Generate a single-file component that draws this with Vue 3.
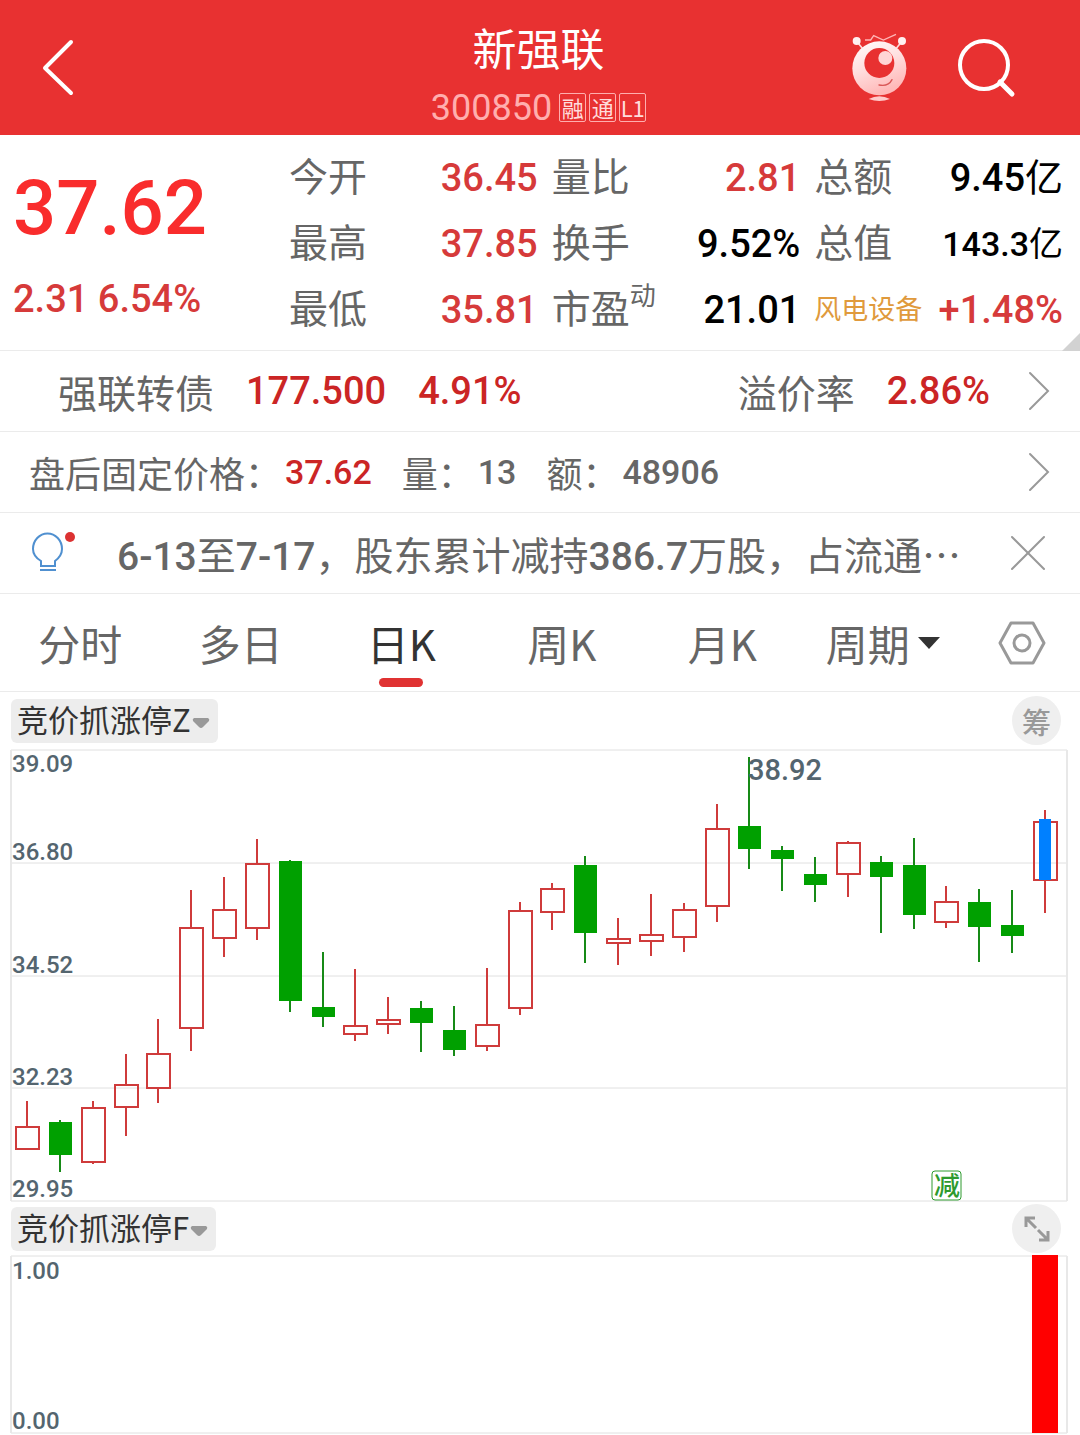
<template>
  <div class="stock-page" lang="zh-CN">
    <header class="header">
      <button class="icon-btn back" type="button" aria-label="返回">
        <svg width="34" height="60" viewBox="0 0 34 60">
          <path d="M30 4 4 30 30 55" fill="none" stroke="#fff" stroke-width="4" stroke-linecap="round" stroke-linejoin="round" />
        </svg>
      </button>
      <div class="title-box">
        <h1 class="title">新强联</h1>
        <div class="code-row">
          <span class="code">300850</span>
          <span v-for="tag in tags" :key="tag" class="tag">{{ tag }}</span>
        </div>
      </div>
      <div class="actions">
        <button class="icon-btn" type="button" aria-label="智能助手">
          <svg width="60" height="72" viewBox="60 36 180 216">
            <defs>
              <linearGradient id="robot" x1="0" y1="0" x2="0.4" y2="1">
                <stop offset="0" stop-color="#fff" />
                <stop offset="0.5" stop-color="#ffe0e0" />
                <stop offset="1" stop-color="#ffb9b9" />
              </linearGradient>
            </defs>
            <path d="M105 60h17l9-13 29 13 38-17" fill="none" stroke="#ffb5b5" stroke-width="4" />
            <path d="M82 66 98 86M214 66 198 86" stroke="#ffdada" stroke-width="5" />
            <circle cx="80" cy="63" r="12" fill="#fff0f0" />
            <circle cx="216" cy="63" r="12" fill="#fff0f0" />
            <circle cx="148" cy="145" r="81" fill="url(#robot)" />
            <circle cx="148" cy="129" r="45" fill="#e83131" />
            <circle cx="166" cy="114" r="21" fill="#ffd5d5" />
            <path d="M147 195q28 6 39-16" fill="none" stroke="#d95757" stroke-width="4" stroke-linecap="round" />
            <path d="M116 237q32-16 64 0-32 12-64 0z" fill="#ffcaca" />
          </svg>
        </button>
        <button class="icon-btn" type="button" aria-label="搜索">
          <svg width="58" height="60" viewBox="0 0 58 60">
            <circle cx="26" cy="27" r="24" fill="none" stroke="#fff" stroke-width="4" />
            <path d="M42 44 54 56" stroke="#fff" stroke-width="5" stroke-linecap="round" />
          </svg>
        </button>
      </div>
    </header>

    <section class="quote">
      <div class="quote-main">
        <div class="price">37.62</div>
        <div class="change">2.31 6.54%</div>
      </div>
      <dl class="stats">
        <div v-for="item in stats" :key="item.label" class="stat">
          <dt :class="{ sector: item.sector }">{{ item.label }}<sup v-if="item.sup">{{ item.sup }}</sup></dt>
          <dd :class="{ red: item.up, compact: item.compact }">{{ item.value }}<span v-if="item.unit" class="unit">{{ item.unit }}</span></dd>
        </div>
      </dl>
    </section>

    <a class="row bond" href="#">
      <span>强联转债</span>
      <span class="num">177.500</span>
      <span class="num">4.91%</span>
      <span class="push">溢价率</span>
      <span class="num">2.86%</span>
      <svg class="chevron" width="22" height="42" viewBox="0 0 22 42">
        <path d="M2 3 20 21 2 39" />
      </svg>
    </a>

    <a class="row fixed" href="#">
      <span>盘后固定价格：<b class="num">37.62</b></span>
      <span>量：<b>13</b></span>
      <span>额：<b>48906</b></span>
      <svg class="chevron push" width="22" height="42" viewBox="0 0 22 42">
        <path d="M2 3 20 21 2 39" />
      </svg>
    </a>

    <div class="row notice">
      <svg class="bulb" width="48" height="44" viewBox="0 0 48 44">
        <path d="M10 35v-5C5 27 2 23 2 18a14 15 0 0 1 29 0c0 5-3 9-7 12v5zM9 39h16" fill="none" stroke="#5090d0" stroke-width="2" />
        <circle cx="39" cy="6" r="5" fill="#dc3232" />
      </svg>
      <a class="notice-text" href="#"><b>6-13</b>至<b>7-17</b>，股东累计减持<b>386.7</b>万股，占流通<span class="dots">…</span></a>
      <button class="icon-btn push" type="button" aria-label="关闭">
        <svg width="38" height="38" viewBox="0 0 38 38">
          <path d="M3 3 35 35M35 3 3 35" stroke="#999" stroke-width="2" stroke-linecap="round" />
        </svg>
      </button>
    </div>

    <nav class="tabs">
      <button
        v-for="tab in tabs"
        :key="tab"
        type="button"
        class="tab"
        :class="{ active: tab === activeTab }"
        @click="activeTab = tab"
      >
        {{ tab }}
        <svg v-if="tab === '周期'" width="22" height="12" viewBox="0 0 22 12">
          <path d="M0 0h22L11 12z" fill="#333" />
        </svg>
      </button>
      <button class="icon-btn" type="button" aria-label="设置">
        <svg width="48" height="44" viewBox="0 0 48 44" fill="none" stroke="#999" stroke-width="3">
          <path d="M13 2h22l11 20-11 20H13L2 22z" stroke-linejoin="round" />
          <circle cx="24" cy="22" r="8" />
        </svg>
      </button>
    </nav>

    <div class="panel-head main-head">
      <button class="chip" type="button">
        竞价抓涨停Z
        <svg width="18" height="12" viewBox="0 0 18 12"><path d="M2 1h14q2 1 1 3l-6 6q-2 2-4 0L1 4Q0 2 2 1z" fill="#999" /></svg>
      </button>
      <button class="round" type="button">筹</button>
    </div>

    <svg class="chart" viewBox="0 0 1080 453">
      <path v-for="y in gridLines" :key="y" :d="`M11 ${y}H1067`" stroke="#e0e0e0" />
      <path d="M11 1V452M1067 1V452" stroke="#e8e8e8" stroke-width="2" />
      <g v-for="(c, i) in candles" :key="i">
        <template v-if="c[0]">
          <path :d="`M${cx(i)} ${c[1]}V${c[2]}M${cx(i)} ${c[3]}V${c[4]}`" stroke="#cf3b3b" stroke-width="2" />
          <rect :x="cx(i) - 11" :y="c[2] + 1" width="23" :height="c[3] - c[2] - 2" fill="none" stroke="#cf3b3b" stroke-width="2" />
        </template>
        <template v-else>
          <path :d="`M${cx(i)} ${c[1]}V${c[4]}`" stroke="#178a17" stroke-width="2" />
          <rect :x="cx(i) - 11" :y="c[2]" width="23" :height="c[3] - c[2]" fill="#00a000" />
        </template>
      </g>
      <rect x="1039" y="70" width="12" height="61" fill="#0080ff" />
      <text v-for="l in priceLabels" :key="l.text" x="12" :y="l.y" class="axis">{{ l.text }}</text>
      <text x="748" y="31" class="peak">38.92</text>
      <rect x="932" y="422" width="29" height="29" rx="3" fill="#fff" stroke="#2e9a2e" />
      <text x="947" y="446" class="mark">减</text>
    </svg>

    <div class="panel-head">
      <button class="chip" type="button">
        竞价抓涨停F
        <svg width="18" height="12" viewBox="0 0 18 12"><path d="M2 1h14q2 1 1 3l-6 6q-2 2-4 0L1 4Q0 2 2 1z" fill="#999" /></svg>
      </button>
      <button class="round" type="button" aria-label="全屏">
        <svg width="28" height="28" viewBox="0 0 28 28" fill="none" stroke="#999" stroke-width="3">
          <path d="M3 12V3h9M3 3l10 10M25 16v9H16M25 25 15 15" />
        </svg>
      </button>
    </div>

    <svg class="chart" viewBox="0 0 1080 179">
      <path d="M11 1H1067M11 178H1067" stroke="#e0e0e0" />
      <path d="M11 1V178M1067 1V178" stroke="#e8e8e8" stroke-width="2" />
      <rect x="1032" y="0" width="26" height="178" fill="#f00" />
      <text x="12" y="24" class="axis">1.00</text>
      <text x="12" y="174" class="axis">0.00</text>
    </svg>
  </div>
</template>

<script setup>
import { ref } from 'vue'

const tags = ['融', '通', 'L1']

const stats = [
  { label: '今开', value: '36.45', up: true },
  { label: '量比', value: '2.81', up: true },
  { label: '总额', value: '9.45', unit: '亿' },
  { label: '最高', value: '37.85', up: true },
  { label: '换手', value: '9.52%' },
  { label: '总值', value: '143.3', unit: '亿', compact: true },
  { label: '最低', value: '35.81', up: true },
  { label: '市盈', sup: '动', value: '21.01' },
  { label: '风电设备', value: '+1.48%', up: true, sector: true }
]

const tabs = ['分时', '多日', '日K', '周K', '月K', '周期']
const activeTab = ref('日K')

const gridLines = [1, 114, 227, 339, 452]

const priceLabels = [
  { text: '39.09', y: 23 },
  { text: '36.80', y: 111 },
  { text: '34.52', y: 224 },
  { text: '32.23', y: 336 },
  { text: '29.95', y: 448 }
]

// [up, high, body top, body bottom, low]
const candles = [
  [1, 352, 377, 401, 401],
  [0, 371, 373, 406, 423],
  [1, 352, 358, 414, 415],
  [1, 305, 335, 359, 387],
  [1, 270, 304, 340, 354],
  [1, 141, 178, 280, 302],
  [1, 128, 160, 190, 208],
  [1, 90, 114, 180, 191],
  [0, 111, 112, 252, 263],
  [0, 203, 258, 268, 278],
  [1, 220, 276, 286, 292],
  [1, 248, 270, 276, 285],
  [0, 252, 259, 274, 303],
  [0, 257, 281, 301, 307],
  [1, 219, 275, 298, 302],
  [1, 153, 161, 260, 266],
  [1, 134, 139, 164, 181],
  [0, 107, 116, 184, 214],
  [1, 169, 189, 195, 216],
  [1, 145, 185, 193, 207],
  [1, 154, 160, 189, 203],
  [1, 55, 79, 158, 173],
  [0, 8, 77, 100, 120],
  [0, 97, 101, 110, 142],
  [0, 108, 125, 136, 153],
  [1, 92, 93, 126, 148],
  [0, 107, 113, 128, 184],
  [0, 89, 116, 166, 180],
  [1, 137, 152, 174, 179],
  [0, 140, 153, 178, 213],
  [0, 141, 176, 187, 204],
  [1, 61, 72, 132, 164]
]

const cx = (i) => Math.round(27 + (i * 1018) / 31)
</script>

<style>
body {
  background: #fff;
}
</style>

<style scoped>
.stock-page {
  font-family: Roboto, "Noto Sans CJK SC", sans-serif;
  color: #666;
  background: #fff;
}

button {
  border: 0;
  padding: 0;
  background: none;
  font-family: "Noto Sans CJK SC", sans-serif;
  color: inherit;
  cursor: pointer;
}

svg {
  display: block;
  flex: none;
}

a {
  color: inherit;
  text-decoration: none;
}

b {
  font-weight: 500;
}

.icon-btn {
  display: flex;
  align-items: center;
  justify-content: center;
}

.header {
  display: grid;
  grid-template-columns: 1fr auto 1fr;
  align-items: center;
  height: 135px;
  padding: 0 64px 0 41px;
  background: #e83131;
  color: #fff;
}

.back {
  justify-self: start;
}

.title-box {
  padding: 20px 0 0 20px;
  text-align: center;
}

.title {
  margin: 0;
  font-size: 44px;
  font-weight: 400;
  line-height: 60px;
}

.code-row {
  display: flex;
  align-items: center;
  gap: 3px;
  height: 54px;
  color: #ffaeae;
}

.code {
  margin-right: 4px;
  font-size: 36px;
}

.tag {
  box-sizing: border-box;
  width: 27px;
  height: 29px;
  border: 1px solid #ffaeae;
  border-radius: 2px;
  font-family: "Noto Sans CJK SC", sans-serif;
  font-size: 22px;
  line-height: 26px;
  color: #ffdcdc;
}

.actions {
  display: flex;
  align-items: center;
  justify-content: flex-end;
  gap: 48px;
}

.quote {
  position: relative;
  display: grid;
  grid-template-columns: 276px 1fr;
  padding: 10px 17px 7px 13px;
  border-bottom: 1px solid #ebebeb;
}

.quote::after {
  content: "";
  position: absolute;
  right: 0;
  bottom: -1px;
  border: 9px solid #d2d2d2;
  border-top-color: transparent;
  border-left-color: transparent;
}

.price {
  font-size: 76px;
  font-weight: 500;
  line-height: 126px;
  color: #f92c2c;
}

.change {
  font-size: 38px;
  font-weight: 500;
  line-height: 56px;
  color: #d63a3a;
}

.stats {
  display: grid;
  grid-template-columns: repeat(3, 1fr);
  column-gap: 14px;
  margin: 0;
}

.stat {
  display: flex;
  align-items: center;
  justify-content: space-between;
  height: 66px;
  white-space: nowrap;
}

.stat dt {
  font-size: 39px;
  line-height: 66px;
}

.stat sup {
  font-size: 26px;
  line-height: 1;
  vertical-align: 18px;
}

.stat dt.sector {
  font-size: 27px;
  color: #e09a3c;
}

.stat dd {
  display: flex;
  align-items: center;
  margin: 0;
  font-size: 38px;
  font-weight: 500;
  line-height: 64px;
  color: #000;
}

.stat dd.red {
  color: #d63a3a;
}

.stat dd.compact {
  font-size: 34px;
}

.unit {
  font-weight: 400;
  line-height: 60px;
}

.row {
  display: flex;
  align-items: center;
  height: 80px;
  border-bottom: 1px solid #ebebeb;
  white-space: nowrap;
}

.num {
  font-weight: 500;
  color: #cb2525;
}

.push {
  margin-left: auto;
}

.chevron {
  fill: none;
  stroke: #999;
  stroke-width: 2;
  stroke-linecap: round;
}

.bond {
  gap: 32px;
  padding: 0 30px 0 58px;
  font-size: 38px;
}

.bond span:not(.num) {
  font-size: 39px;
}

.bond .chevron {
  margin-left: 6px;
}

.fixed {
  gap: 30px;
  padding: 0 30px 0 29px;
  font-size: 36px;
}

.fixed span {
  display: flex;
  align-items: center;
}

.fixed b {
  padding-left: 4px;
  font-size: 34px;
}

.notice {
  padding: 0 33px 0 31px;
}

.notice-text {
  margin-left: 38px;
  font-size: 39px;
}

.dots {
  font-family: "Noto Sans CJK SC", sans-serif;
}

.tabs {
  display: grid;
  grid-template-columns: repeat(6, 1fr) 117px;
  height: 97px;
  border-bottom: 1px solid #ebebeb;
}

.tab {
  position: relative;
  display: flex;
  align-items: center;
  justify-content: center;
  gap: 8px;
  font-size: 42px;
  line-height: 60px;
}

.tab.active {
  color: #333;
}

.tab.active::after {
  content: "";
  position: absolute;
  left: calc(50% - 22px);
  bottom: 4px;
  width: 44px;
  height: 9px;
  border-radius: 5px;
  background: #e03232;
}

.panel-head {
  display: flex;
  align-items: center;
  justify-content: space-between;
  height: 53px;
  padding: 0 19px 0 11px;
}

.main-head {
  height: 57px;
}

.chip {
  display: flex;
  align-items: center;
  gap: 1px;
  height: 44px;
  padding: 0 8px 4px 6px;
  border-radius: 6px;
  background: #ededed;
  font-size: 31px;
  line-height: 40px;
  color: #333;
}

.chip svg {
  margin-top: 8px;
}

.round {
  display: flex;
  align-items: center;
  justify-content: center;
  width: 49px;
  height: 49px;
  border-radius: 50%;
  background: #efefef;
  font-size: 29px;
  font-weight: 500;
  line-height: 40px;
  color: #999;
}

.chart {
  width: 100%;
  height: auto;
  overflow: visible;
}

.axis,
.peak {
  font-size: 24px;
  font-weight: 500;
  fill: #54656f;
}

.peak {
  font-size: 29px;
}

.mark {
  font-family: "Noto Sans CJK SC", sans-serif;
  font-size: 26px;
  font-weight: 500;
  text-anchor: middle;
  fill: #2e9a2e;
}
</style>
